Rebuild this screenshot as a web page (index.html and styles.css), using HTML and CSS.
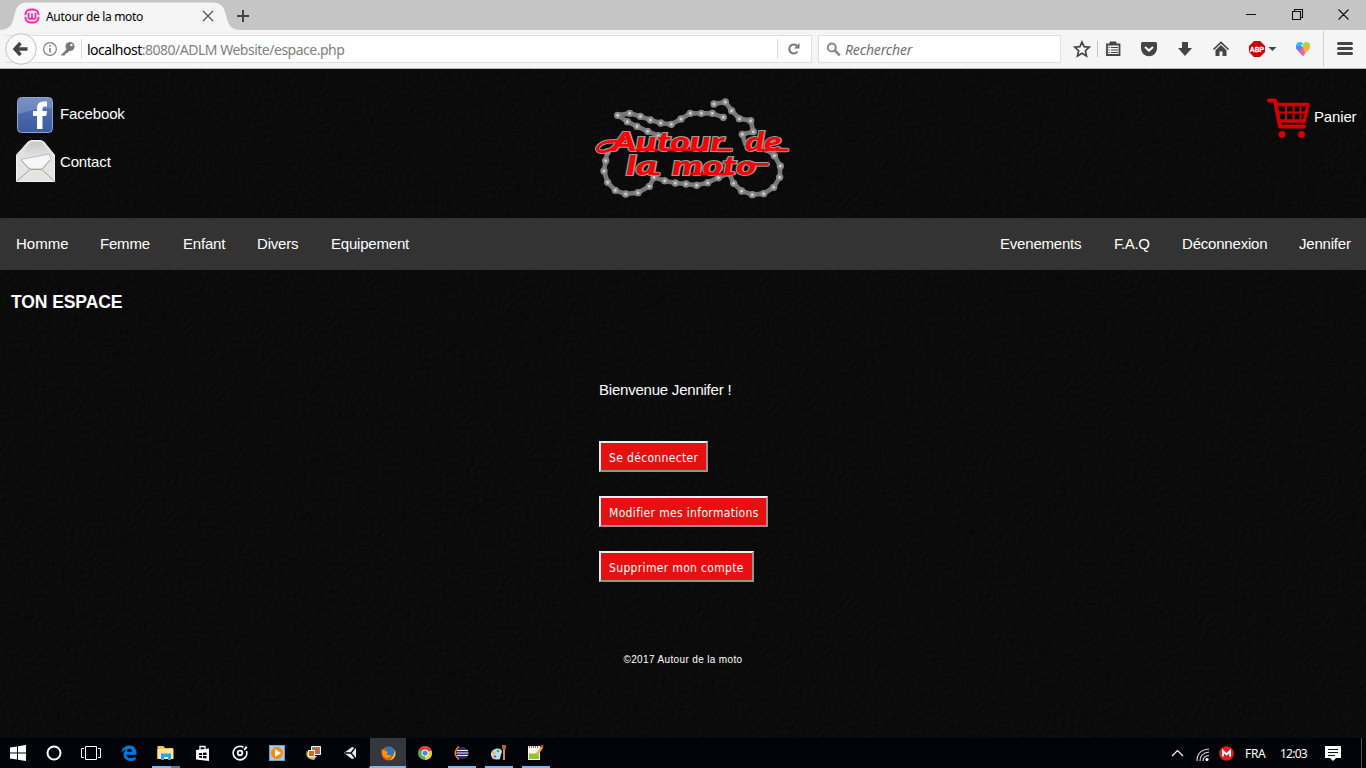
FILE: index.html
```html
<!DOCTYPE html>
<html lang="fr">
<head>
<meta charset="utf-8">
<title>Autour de la moto</title>
<link rel="stylesheet" href="styles.css">
</head>
<body>
<div class="screen">
  <div class="tabbar">
    <svg class="tab-shape" width="240" height="30" viewBox="0 0 240 30"><path d="M0 30C10 29 12 25 14.500 15C16 7 19 2.500 28 2.500H212C221 2.500 224 7 226 15C228.500 25 230 29 240 30Z" fill="#f5f5f5"/></svg>
    <div class="tab">
      <svg width="16" height="16" viewBox="0 0 16 16"><rect x="1.500" y="1.500" width="13" height="13" rx="5" fill="#fbe0f0" stroke="#f62ba4" stroke-width="1.900"/><path d="M0 8h3M13 8h3" stroke="#f5f5f5" stroke-width="1.300"/><path d="M4.500 5v4q0 2 1.700 2T8 9V5.500M8 9q0 2 1.800 2t1.700-2V5" fill="none" stroke="#e71e98" stroke-width="1.500"/></svg>
      <span class="tab-title">Autour de la moto</span>
      <svg width="12" height="12" viewBox="0 0 12 12"><path d="M1 1l10 10M11 1L1 11" stroke="#555" stroke-width="1.300"/></svg>
    </div>
    <svg class="newtab" width="12" height="12" viewBox="0 0 12 12"><path d="M6 0v12M0 6h12" stroke="#444" stroke-width="2"/></svg>
    <svg class="winctl" width="106" height="14" viewBox="0 0 106 14"><path d="M0 7.500h10M46.500 4.500h8v8h-8zM48.500 4V2.500h8v8H55M92.500 2.500l10 10M102.500 2.500l-10 10" fill="none" stroke="#111" stroke-width="1.100"/></svg>
  </div>

  <div class="toolbar">
    <div class="urlbar">
      <svg class="back" width="32" height="32" viewBox="0 0 32 32"><circle cx="16" cy="16" r="15.300" fill="#fafafa" stroke="#c1c1c1"/><path d="M15.500 10L10 16l5.500 6M10.500 16h12" fill="none" stroke="#444" stroke-width="3.400"/></svg>
      <svg class="info" width="34" height="16" viewBox="0 0 34 16"><circle cx="8" cy="8" r="6.400" fill="none" stroke="#808080" stroke-width="1.200"/><path d="M8 7v4.500M8 4v1.800" stroke="#808080" stroke-width="1.600"/><circle cx="28" cy="5.500" r="4.500" fill="#777"/><path d="M25.500 8L19.500 14h3l1-2 2-.5 2-3" fill="#777" stroke="#777"/><circle cx="29.500" cy="4" r="1.200" fill="#fff"/></svg>
      <i class="sep"></i>
      <span class="url"><b>localhost</b>:8080/ADLM Website/espace.php</span>
      <i class="sep sep-reload"></i>
      <svg width="14" height="14" viewBox="0 0 14 14"><path d="M10.500 9.500A4.500 4.500 0 1 1 10 3.800" fill="none" stroke="#777" stroke-width="2"/><path d="M12.500 1v5.500H7z" fill="#777"/></svg>
    </div>
    <div class="search">
      <svg width="15" height="15" viewBox="0 0 15 15"><circle cx="5.800" cy="5.500" r="4" fill="none" stroke="#888" stroke-width="2"/><path d="M8.800 8.500l5 4.800" stroke="#888" stroke-width="2.500"/></svg>
      <span>Rechercher</span>
    </div>
    <svg class="tools" width="296" height="38" viewBox="1070 30 296 38">
      <path d="M1082 42l2.100 4.700 5.100.5-3.800 3.500 1.100 5.200-4.500-2.700-4.500 2.700 1.100-5.200-3.800-3.500 5.100-.5z" fill="none" stroke="#444" stroke-width="1.700"/>
      <path d="M1097.500 41v16" stroke="#c4c4c4"/>
      <path d="M1107 44.500h12.500v10.500H1107z" fill="none" stroke="#444" stroke-width="1.800"/><path d="M1111 47.500h7M1111 50h7M1111 52.500h7M1108.500 47.500h1.300M1108.500 50h1.300M1108.500 52.500h1.300" stroke="#444" stroke-width="1.200"/><path d="M1110 44v-2h6v2" fill="#444" stroke="#444"/>
      <path d="M1142.500 42h13q1.500 0 1.500 1.500v5a8 7.800 0 0 1-16 0v-5q0-1.500 1.500-1.500z" fill="#444"/><path d="M1145 47l4 3.600 4-3.600" fill="none" stroke="#fff" stroke-width="2"/>
      <path d="M1182 42h6v6h4l-7 8-7-8h4z" fill="#444"/>
      <path d="M1213.500 49.500l7.500-7 7.500 7" fill="none" stroke="#444" stroke-width="1.700"/><path d="M1215.500 50.200l5.500-5.200 5.500 5.200V56h-4v-4.500h-3V56h-4z" fill="#444"/>
      <path d="M1254 41h6l5 5v6l-5 5h-6l-5-5v-6z" fill="#cb0000"/><text x="1249.700" y="52.300" class="abp" textLength="14.500" lengthAdjust="spacingAndGlyphs">ABP</text>
      <path d="M1268.500 47h8l-4 4z" fill="#444"/>
      <path d="M1303 44l-3 3-4 2v-4q1-3 4-3t3 2z" fill="#2bc4ee"/><path d="M1303 44q1-2 3.500-2t3.500 3v3l-7-1z" fill="#a5d938"/><path d="M1303 47l-3-1.500-4 1q0 3 2.500 5l4.500-1z" fill="#6979ee"/><path d="M1303 46.500l7-1q0 4-3 6l-4 4z" fill="#ffad3b"/><path d="M1303 47l-4.500 4.500 4.500 5 2-3z" fill="#f15db6"/>
      <path d="M1323.500 31v36" stroke="#d0d0d0"/><path d="M1338.500 43.500h13M1338.500 48.500h13M1338.500 53.500h13" stroke="#444" stroke-width="3" stroke-linecap="round"/>
    </svg>
  </div>

  <div class="page">
    <svg class="texture" width="1366" height="669"><filter id="rough" x="0" y="0" width="100%" height="100%" color-interpolation-filters="sRGB"><feTurbulence type="fractalNoise" baseFrequency=".22" numOctaves="4" seed="7"/><feDiffuseLighting surfaceScale="1.100" diffuseConstant=".056" lighting-color="#fff"><feDistantLight azimuth="225" elevation="50"/></feDiffuseLighting></filter><rect width="1366" height="669" filter="url(#rough)"/></svg>

    <header class="header">
      <div class="social">
        <a class="link-row fb"><svg width="36" height="36" viewBox="0 0 36 36"><defs><linearGradient id="fbg" x2="0" y2="1"><stop stop-color="#6781b8"/><stop offset=".5" stop-color="#4968aa"/><stop offset="1" stop-color="#3b5ba1"/></linearGradient></defs><rect x=".5" y=".5" width="35" height="35" rx="4" fill="url(#fbg)" stroke="#90a6cc"/><path d="M1 5q0-4 4-4h26q4 0 4 4v6q-16 0-34 6z" fill="#8fa6d0" opacity=".45"/><path d="M20 32V19h-4v-5h4v-3q0-6.500 6.500-6.500H30v5h-2.500q-2 0-2 2V14H30l-.7 5h-3.800v13z" fill="#fff"/></svg><span>Facebook</span></a>
        <a class="link-row mail"><svg width="40" height="42" viewBox="0 0 40 42"><defs><linearGradient id="eg" x2="0" y2="1"><stop stop-color="#c8c8c8"/><stop offset="1" stop-color="#fafafa"/></linearGradient></defs><path d="M.5 41.500V15L12 2q2-1.500 4-1.500h8q2 0 4 1.500l10.500 13v26.500z" fill="#e2e2e2" stroke="#f3f3f3"/><path d="M4 18L13 4q2-2 4-2h7q2 0 3 2l10 14-10 12H14z" fill="url(#eg)"/><path d="M4.500 19.500L33 14l2 5-9 10H14z" fill="#f6f6f6" stroke="#bcbcbc"/><path d="M1 15l13 14.500h12L38 15v26H1z" fill="#e4e4e4" opacity=".75"/><path d="M5 20l9 9.500h12l8-9.500M1 41l13-11.500M38 41L26 29.500" fill="none" stroke="#9da39b"/></svg><span>Contact</span></a>
      </div>
      <svg class="logo" width="215" height="120" viewBox="0 0 645 360">
        <g class="chain-links">
          <path d="M387 42L421 36 440 62 463 86 497 92 505 125 472 133 482 165"/>
          <path d="M415 82L382 70 349 70 316 70 288 87 259 103 227 99 196 90 166 79 134 70 98 76 127 95 156 109 188 124 220 137 248 153"/>
          <path d="M67 185L62 212 57 243 68 277 91 301 122 312 159 308 193 289 207 262 239 272 271 279 303 282 335 286 368 278 400 263 432 250 446 280 470 303 502 314 536 311 566 292 584 262 586 228 568 197 545 178"/>
        </g>
        <g class="chain-pins">
          <path d="M387 42h0M421 36h0M440 62h0M463 86h0M497 92h0M505 125h0M472 133h0M415 82h0M382 70h0M349 70h0M316 70h0M288 87h0M259 103h0M227 99h0M196 90h0M166 79h0M134 70h0M98 76h0M127 95h0M156 109h0M188 124h0M220 137h0M67 185h0M62 212h0M57 243h0M68 277h0M91 301h0M122 312h0M159 308h0M193 289h0M207 262h0M239 272h0M271 279h0M303 282h0M335 286h0M368 278h0M400 263h0M432 250h0M446 280h0M470 303h0M502 314h0M536 311h0M566 292h0M584 262h0M586 228h0M568 197h0M545 178h0" class="outer"/>
          <path d="M387 42h0M421 36h0M440 62h0M463 86h0M497 92h0M505 125h0M472 133h0M415 82h0M382 70h0M349 70h0M316 70h0M288 87h0M259 103h0M227 99h0M196 90h0M166 79h0M134 70h0M98 76h0M127 95h0M156 109h0M188 124h0M220 137h0M67 185h0M62 212h0M57 243h0M68 277h0M91 301h0M122 312h0M159 308h0M193 289h0M207 262h0M239 272h0M271 279h0M303 282h0M335 286h0M368 278h0M400 263h0M432 250h0M446 280h0M470 303h0M502 314h0M536 311h0M566 292h0M584 262h0M586 228h0M568 197h0M545 178h0" class="inner"/>
        </g>
        <g class="logo-text">
          <g class="swash-edge">
            <path d="M95 154Q48 151 37 175Q38 190 66 183Q94 173 120 146M400 180h38M576 180h31M490 223h58M205 252h16"/>
          </g>
          <text x="80" y="184" textLength="338" lengthAdjust="spacingAndGlyphs">Autour</text>
          <text x="480" y="184" textLength="110" lengthAdjust="spacingAndGlyphs">de</text>
          <text x="124" y="255" textLength="92" lengthAdjust="spacingAndGlyphs">la</text>
          <text x="262" y="255" textLength="252" lengthAdjust="spacingAndGlyphs">moto</text>
          <g class="swash">
            <path d="M95 154Q48 151 37 175Q38 190 66 183Q94 173 120 146M400 180h38M576 180h31M490 223h58M205 252h16M155 180h60M250 180h110M520 180h30M320 252h120"/>
          </g>
        </g>
      </svg>
      <a class="cart"><svg width="43" height="41" viewBox="0 0 43 41"><path d="M2 2.500h6l5 26h24" fill="none" stroke="#d40000" stroke-width="4" stroke-linecap="round" stroke-linejoin="round"/><path d="M9 6.500h32L37.500 23H12" fill="none" stroke="#d40000" stroke-width="3.400" stroke-linejoin="round"/><path d="M10 14.500h29M19 7v16M26.500 7v16M33.500 7v16" stroke="#d40000" stroke-width="1.900"/><circle cx="15" cy="36.500" r="3.500" fill="#d40000"/><circle cx="34.500" cy="36.500" r="3.500" fill="#d40000"/></svg><span>Panier</span></a>
    </header>

    <nav class="nav">
      <a class="w52">Homme</a><a class="w51">Femme</a><a class="w42">Enfant</a><a class="w42">Divers</a><a class="w78">Equipement</a>
      <a class="right w82">Evenements</a><a class="w36">F.A.Q</a><a class="w85">Déconnexion</a><a class="w51">Jennifer</a>
    </nav>
    <h3>TON ESPACE</h3>
    <main>
      <p>Bienvenue Jennifer !</p>
      <button class="b1">Se déconnecter</button>
      <button class="b2">Modifier mes informations</button>
      <button class="b3">Supprimer mon compte</button>
    </main>
    <footer>©2017 Autour de la moto</footer>
  </div>

  <div class="taskbar">
    <div class="slot s1"><svg width="16" height="16"><path d="M0 2.500L7 1.500V7.500H0zM8 1.300L16 0v7.500H8zM0 8.500h7v6L0 13.500zM8 8.500h8V16l-8-1.300z" fill="#fff"/></svg></div>
    <div class="slot s1"><svg width="16" height="16"><circle cx="8" cy="8" r="6.500" fill="none" stroke="#fff" stroke-width="2"/></svg></div>
    <div class="slot s3"><svg width="20" height="16"><path d="M4.500 1.500h11v13h-11zM3 3.500H.5v9H3M17 3.500h2.500v9H17" fill="none" stroke="#fff"/></svg></div>
    <div class="slot"><svg width="16" height="16"><path d="M.500 7.500C1 2.500 4.500.500 8.500.500c4.500 0 7 3 7 8v1.200H5.500c.2 3.800 5.500 4.200 9 2v3.100C9.500 17.500 2.500 15.500 2.500 9.500c0-2.500 1.500-4.200 3.500-5Q3 4.500.5 7.500zm5.200-.7H11C11 2.800 6.300 3 5.700 6.800z" fill="#0078d7"/></svg></div>
    <div class="slot open double"><svg width="17" height="16"><path d="M.5 1h6l1.500 2h8v11H.5z" fill="#f5c94b"/><path d="M.5 4h16v10H.5z" fill="#ffe694"/><path d="M4 15V8.500h10V15h-3v-3H7v3z" fill="#29a8df"/></svg></div>
    <div class="slot"><svg width="16" height="17"><path d="M1 5l13-1.500V16L1 14.500z" fill="#fff"/><path d="M5 5V1.500h5V4" fill="none" stroke="#fff" stroke-width="1.300"/><path d="M4 8.200l3-.3v2H4zM8 7.800l3.500-.3v2.400H8zM4 10.900h3v2l-3-.3zM8 10.900h3.500v2.500L8 13z" fill="#000"/></svg></div>
    <div class="slot"><svg width="16" height="16"><path d="M11.500 2.200A6.800 6.800 0 1 0 14.500 6" fill="none" stroke="#fff" stroke-width="1.600"/><circle cx="8" cy="8" r="2.300" fill="none" stroke="#fff" stroke-width="1.800"/><path d="M12 4.500q2-.5 2.500-3" fill="none" stroke="#fff" stroke-width="2"/></svg></div>
    <div class="slot"><svg width="16" height="16"><rect x=".5" y=".5" width="15" height="15" fill="#a4cbe8" stroke="#68a3d0"/><circle cx="8" cy="8" r="6" fill="#f58a0b"/><path d="M6 4l6 4-6 4z" fill="#fff"/></svg></div>
    <div class="slot"><svg width="17" height="16"><path d="M2 5q-3 9 7 10l3-4H4z" fill="#efb764"/><path d="M6.500 1.500h9v8h-9z" fill="#3c9bd4" stroke="#fff"/><circle cx="11" cy="5.500" r="2.800" fill="#ef5811"/><path d="M3.500 5.500h6v6h-6z" fill="#de651f" stroke="#fff"/></svg></div>
    <div class="slot"><svg width="14" height="14"><path d="M0 7l8-6 4 1.500v9L8 13z" fill="#eee"/><path d="M7 7h-6M7 7l4-5M7 7l4 5" stroke="#000" stroke-width="1.300"/></svg></div>
    <div class="slot active"><svg width="15" height="15"><circle cx="7.500" cy="7.500" r="7" fill="#e66000"/><path d="M4 1.500Q8-.8 13 3q1.500 3 0 6-3 2-6 0-3-3-3-7.500z" fill="#2e77b8"/><path d="M.5 3q1 1.500 3 1.500L7 6 5.500 8q2 2.500 5 1-1 3.500-5 3-4-1-5-8z" fill="#ff9500"/><path d="M14 4q2 8-5 10.500 4-4 5-10.500z" fill="#ffcb3b"/></svg></div>
    <div class="slot"><svg width="14" height="14"><circle cx="7" cy="7" r="7" fill="#4aaf51"/><path d="M7 7L1 3.400A7 7 0 0 1 13.500 4.500z" fill="#e24132"/><path d="M7 7l6.500-2.500Q15.500 13 7 14z" fill="#f7cb3b"/><circle cx="7" cy="7" r="3.500" fill="#fff"/><circle cx="7" cy="7" r="2.600" fill="#4587ef"/></svg></div>
    <div class="slot open"><svg width="15" height="14"><circle cx="8.500" cy="7" r="6" fill="#342a6c"/><path d="M5 .5Q-2.500 7 5 13.500" fill="none" stroke="#f18a22" stroke-width="1.400"/><path d="M3 4.500h11M2.500 7h12M3 9.500h11" stroke="#eee" stroke-width="1.200"/></svg></div>
    <div class="slot open"><svg width="17" height="16"><path d="M1 10C0 3 12 1 12 7q-2 5-2 7-8 2-9-4z" fill="#b8dcef"/><circle cx="4" cy="8" r="1.500" fill="#e8b536"/><circle cx="8" cy="6" r="1.300" fill="#3aab5c"/><circle cx="5" cy="11.500" r="1.300" fill="#d4463c"/><path d="M14 3v12" stroke="#d98a36" stroke-width="2"/><path d="M12 0h4v4h-4z" fill="#a5663a"/></svg></div>
    <div class="slot open"><svg width="17" height="16"><path d="M1 1h12v14H1z" fill="#f7f7ed"/><path d="M2 8q5 2 10-1v7H2z" fill="#8ac82c"/><path d="M2 2h10" stroke="#777" stroke-width="2" stroke-dasharray="1 1"/><path d="M15 2L9.500 10" stroke="#f1b62b" stroke-width="2.500"/><path d="M15.500 0l-1 2" stroke="#d33" stroke-width="3"/></svg></div>
    <div class="tray">
      <svg width="13" height="8"><path d="M1 7l5.500-5.500L12 7" fill="none" stroke="#fff" stroke-width="1.200"/></svg>
      <svg class="wifi" width="14" height="14"><path d="M1 13Q1 2 13 1M4 13Q4 5 13 4M7 13Q7 8 13 7.500" fill="none" stroke="#d5d5d5" stroke-width="1.200"/><circle cx="11" cy="11.500" r="1.600" fill="#fff"/></svg>
      <svg class="mega" width="15" height="15"><circle cx="7.500" cy="7.500" r="7.300" fill="#df1e26"/><path d="M4 10.500V5l3.500 3.500L11 5v5.500" fill="none" stroke="#fff" stroke-width="1.900"/></svg>
      <span class="lang">FRA</span><span class="clock">12:03</span>
      <svg class="note" width="16" height="17"><path d="M0 1h16v12h-5l-3 3-3-3H0z" fill="#fff"/><path d="M3 4.500h10M3 7.500h10M3 10.500h7" stroke="#111"/></svg>
      <i></i>
    </div>
  </div>
</div>
</body>
</html>
```
FILE: styles.css
```css
* { box-sizing: border-box; }
body { margin: 0; }
svg { display: block; flex: none; }
.screen { width: 1366px; height: 768px; overflow: hidden; display: flex; flex-direction: column; font-family: "Liberation Sans", Arial, sans-serif; }
.tabbar { height: 30px; background: #c5c5c5; display: flex; position: relative; align-items: center; flex: none; }
.tab-shape { position: absolute; left: 0; top: 0; }
.tab { position: relative; width: 214px; padding-left: 24px; display: flex; align-items: center; height: 32px; margin-top: 2px; }
.tab-title { font: 12px "Noto Sans", sans-serif; margin-left: 6px; width: 156px; letter-spacing: -0.32px; white-space: nowrap; }
.newtab { margin-left: 23px; margin-top: 2px; position: relative; }
.winctl { margin-left: auto; margin-right: 14px; margin-top: -2px; }
.toolbar { height: 39px; background: #f5f5f5; border-bottom: 1px solid #b5b5b5; display: flex; align-items: center; flex: none; font-family: "Noto Sans", sans-serif; }
.urlbar { margin-left: 5px; width: 807px; height: 28px; border: 1px solid #e0e0e0; border-left: 0; background: linear-gradient(90deg, #f5f5f5 16px, #fff 16px); display: flex; align-items: center; }
.info { margin-left: 5px; }
.sep { width: 1px; height: 20px; background: #dcdcdc; margin-left: 5px; margin-right: 5px; }
.url { font-size: 14px; letter-spacing: -0.49px; color: #808080; width: 690px; white-space: nowrap; }
.url b { font-weight: 400; color: #000; }
.sep-reload { margin-left: 0; margin-right: 9px; }
.search { margin-left: 6px; width: 243px; height: 28px; border: 1px solid #e0e0e0; background: #fff; display: flex; align-items: center; padding-left: 7px; font-size: 14px; font-style: italic; color: #707070; gap: 4px; letter-spacing: -0.15px; }
.tools { margin-left: auto; }
.abp { font: bold 8px "Liberation Sans", sans-serif; fill: #fff; stroke: #fff; stroke-width: .3; }
.page { position: relative; height: 669px; background: #0b0b0b; color: #fff; font-size: 15px; isolation: isolate; flex: none; }
.texture { position: absolute; inset: 0; z-index: -1; }
.header { height: 149px; display: flex; justify-content: space-between; letter-spacing: -0.15px; }
.social { padding: 28px 0 0 16px; width: 585px; }
.link-row { display: flex; align-items: center; gap: 5px; }
.fb { padding-left: 1px; gap: 7px; height: 36px; }
.fb span { margin-top: -4px; }
.mail { margin-top: 7px; height: 42px; gap: 4px; }
.logo { margin-top: 21px; letter-spacing: 0; }
.chain-links { fill: none; stroke: #777; stroke-width: 14; stroke-linejoin: round; }
.chain-pins { stroke-linecap: round; fill: none; }
.outer { stroke: #858585; stroke-width: 22; }
.inner { stroke: #d0d0d0; stroke-width: 9; }
.logo-text text { font: italic 900 78px "Lato", sans-serif; fill: #fa0000; stroke: #999; stroke-width: 6; paint-order: stroke; }
.swash, .swash-edge { fill: none; stroke-linecap: round; stroke: #fa0000; stroke-width: 8; }
.swash-edge { stroke: #999; stroke-width: 14; }
.cart { width: 566px; display: flex; justify-content: flex-end; padding: 29px 10px 0 0; gap: 4px; }
.cart span { padding-top: 10px; width: 42px; white-space: nowrap; }
.nav { height: 52px; background: #333; display: flex; align-items: center; padding: 0 16px 2px; gap: 32px; letter-spacing: -0.2px; }
.nav a { white-space: nowrap; flex: none; }
.right { margin-left: auto; }
.w36 { width: 36px; letter-spacing: -0.4px; }
.w42 { width: 42px; }
.w51 { width: 51px; }
.w52 { width: 52px; letter-spacing: 0; }
.w78 { width: 78px; }
.w82 { width: 82px; }
.w85 { width: 85px; }
h3 { margin: 22px 0 0 11px; font-size: 17.55px; line-height: 21px; height: 21px; letter-spacing: -0.1px; }
main { width: 169px; margin-left: 599px; padding-top: 67px; display: flex; flex-direction: column; align-items: flex-start; gap: 24px; }
main p { margin: 0 0 17px; line-height: 20px; white-space: nowrap; letter-spacing: -0.22px; }
button { height: 31px; border: 2px solid; border-color: #efefef #929292 #929292 #efefef; background: #e61010; color: #fff; font: 12px "DejaVu Sans Condensed", "DejaVu Sans", sans-serif; font-stretch: condensed; letter-spacing: 0.34px; padding: 2px 0 0 8px; text-align: left; white-space: nowrap; border-radius: 0; }
.b1 { width: 109px; }
.b2 { width: 169px; }
.b3 { width: 155px; }
footer { text-align: center; font-size: 10px; line-height: 12px; margin-top: 72px; letter-spacing: 0.36px; }
.taskbar { height: 30px; background: #020308; display: flex; font: 12px "Noto Sans", sans-serif; color: #fff; }
.slot { width: 37px; display: flex; align-items: center; justify-content: center; position: relative; }
.s1 { width: 36px; }
.s3 { width: 38px; }
.open::after { content: ""; position: absolute; left: 5px; bottom: 0; width: 28px; height: 2px; background: #76b9ed; }
.double::after { background: linear-gradient(90deg, #76b9ed 19px, #507da2 19px); }
.active { background: #34373d; border-bottom: 2px solid #76b9ed; border-left: 1px solid #020308; padding-top: 2px; }
.tray { margin-left: auto; display: flex; align-items: center; }
.wifi { margin-left: 12px; margin-top: 3px; }
.mega { margin-left: 9px; }
.lang { width: 22px; margin-left: 11px; letter-spacing: -0.3px; white-space: nowrap; }
.clock { width: 28px; margin-left: 13px; letter-spacing: -0.75px; white-space: nowrap; }
.note { margin-left: 17px; }
.tray i { width: 1px; height: 30px; background: #555; margin-left: 20px; margin-right: 4px; }
```
